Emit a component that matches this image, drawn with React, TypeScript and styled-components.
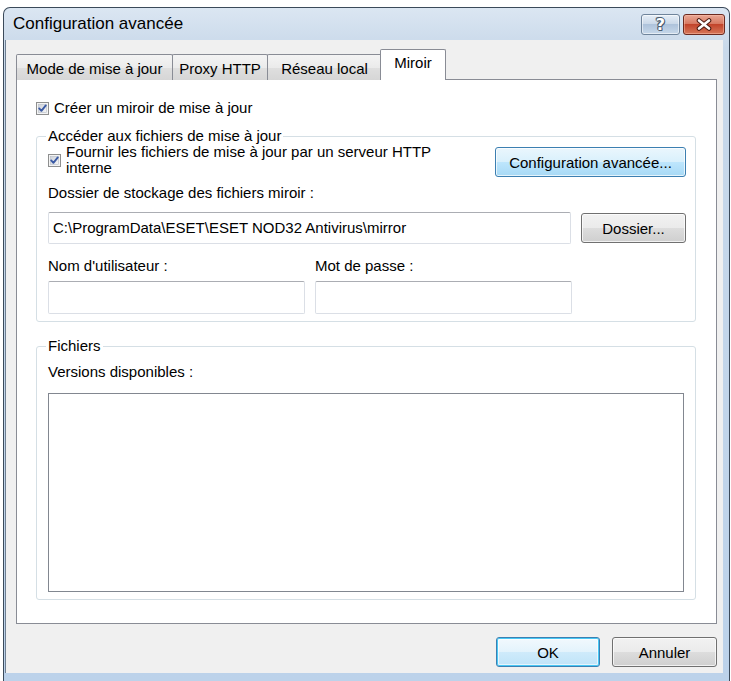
import React from "react";
import styled, { createGlobalStyle, css } from "styled-components";

const GlobalStyle = createGlobalStyle`
  html, body {
    margin: 0;
    padding: 0;
    background: #ffffff;
  }
  body {
    font-family: "Liberation Sans", Arial, sans-serif;
    font-size: 15px;
    color: #000;
  }
`;

const Page = styled.div`
  width: 731px;
  height: 681px;
  padding: 7px 0 0 3px;
  box-sizing: border-box;
  overflow: hidden;
`;

const Window = styled.div`
  width: 727px;
  height: 674px;
  box-sizing: border-box;
  display: flex;
  flex-direction: column;
  border: 1px solid #3b4a5a;
  border-bottom: none;
  border-radius: 7px 7px 0 0;
  background: linear-gradient(#dbe6f2 0px, #c9d9ea 40px, #bcd2ea 100%);
  padding: 0 6px 8px 1px;
`;

const TitleBar = styled.div`
  height: 32px;
  display: flex;
  justify-content: space-between;
  align-items: flex-start;
  padding: 0 0 0 8px;
  margin-right: -2px;
`;

const Title = styled.div`
  font-size: 17px;
  line-height: 32px;
  color: #000;
`;

const Caption = styled.div`
  display: flex;
  gap: 3px;
  margin-top: 6px;
`;

const CaptionButton = styled.div<{ $kind: "help" | "close" }>`
  height: 21px;
  box-sizing: border-box;
  border-radius: 3px;
  display: flex;
  align-items: center;
  justify-content: center;
  ${(p) =>
    p.$kind === "help"
      ? css`
          width: 39px;
          border: 1px solid #6f849b;
          background: linear-gradient(#e6eef7 0%, #cbd9e9 45%, #aec3db 50%, #c7d8ea 100%);
          box-shadow: inset 0 0 0 1px rgba(255, 255, 255, 0.55);
        `
      : css`
          width: 42px;
          border: 1px solid #6b2a20;
          background: linear-gradient(#eaa896 0%, #d77a63 45%, #c2442b 50%, #d6775a 100%);
          box-shadow: inset 0 0 0 1px rgba(255, 200, 180, 0.45);
        `}
`;

const HelpGlyph = styled.span`
  font-family: "DejaVu Sans", sans-serif;
  font-weight: bold;
  font-size: 16px;
  line-height: 1;
  color: #ffffff;
  text-shadow: 1px 0 0 #4d5d70, -1px 0 0 #4d5d70, 0 1px 0 #4d5d70, 0 -1px 0 #4d5d70,
    1px 1px 0 #4d5d70, -1px -1px 0 #4d5d70;
`;

const Client = styled.div`
  flex: 1;
  display: flex;
  flex-direction: column;
  background: #f0f0f0;
  padding: 9px 6px 6px 10px;
  border-left: 1px solid #6e7f92;
`;

const TabStrip = styled.div`
  height: 31px;
  display: flex;
  align-items: flex-end;
  padding-left: 1px;
  position: relative;
  z-index: 1;
`;

const Tab = styled.div<{ $width: number; $active?: boolean }>`
  width: ${(p) => p.$width}px;
  box-sizing: border-box;
  border: 1px solid #898c95;
  border-bottom: none;
  border-radius: 2px 2px 0 0;
  text-align: center;
  font-size: 15px;
  margin-left: -1px;
  ${(p) =>
    p.$active
      ? css`
          height: 31px;
          margin-left: -2px;
          margin-right: -2px;
          background: #ffffff;
          line-height: 26px;
          position: relative;
        `
      : css`
          height: 26px;
          background: linear-gradient(#f4f4f4 0%, #ebebeb 50%, #dfdfdf 51%, #d6d6d6 100%);
          line-height: 28px;
        `}
`;

const Panel = styled.div`
  flex: 1;
  margin-top: -1px;
  border: 1px solid #898c95;
  background: #ffffff;
  padding: 20px 20px 0 19px;
  display: flex;
  flex-direction: column;
`;

const CheckRow = styled.div`
  display: flex;
  align-items: center;
  gap: 5px;
  line-height: 16px;
`;

const Box = styled.span`
  width: 13px;
  height: 13px;
  flex: 0 0 13px;
  display: block;
`;

const Group = styled.div<{ $gap: number }>`
  margin-top: ${(p) => p.$gap}px;
  border: 1px solid #d5dfe5;
  border-radius: 3px;
  padding: 0 9px 7px 11px;
  display: flex;
  flex-direction: column;
`;

const GroupTitle = styled.div`
  align-self: flex-start;
  margin: -9px 0 0 -2px;
  padding: 0 2px;
  background: #ffffff;
  line-height: 16px;
`;

const FirstRow = styled.div`
  display: flex;
  justify-content: space-between;
  align-items: flex-start;
`;

const TwoLineCheck = styled.div`
  display: flex;
  align-items: center;
  gap: 5px;
  line-height: 16px;
`;

const Label = styled.div<{ $gap: number }>`
  margin-top: ${(p) => p.$gap}px;
  line-height: 16px;
`;

const FieldRow = styled.div`
  margin-top: 11px;
  display: flex;
  align-items: center;
  gap: 10px;
`;

const TextBox = styled.div<{ $height: number }>`
  height: ${(p) => p.$height}px;
  box-sizing: border-box;
  border: 1px solid #dbdfe6;
  border-top-color: #abadb3;
  border-radius: 2px;
  background: #ffffff;
  padding: 0 4px;
  display: flex;
  align-items: center;
  line-height: 16px;
  white-space: nowrap;
  overflow: hidden;
`;

const PathBox = styled(TextBox)`
  flex: 1;
`;

const Columns = styled.div`
  margin-top: 14px;
  display: grid;
  grid-template-columns: 257px 257px;
  column-gap: 10px;
  row-gap: 7px;
  line-height: 16px;
`;

const ListBox = styled.div`
  margin: 13px 2px 0 0;
  height: 199px;
  box-sizing: border-box;
  border: 1px solid #828790;
  background: #ffffff;
`;

const Button = styled.div<{ $width: number; $variant?: "hot" | "default" }>`
  width: ${(p) => p.$width}px;
  height: 30px;
  box-sizing: border-box;
  border-radius: 3px;
  display: flex;
  align-items: center;
  justify-content: center;
  font-size: 15px;
  flex: 0 0 auto;
  ${(p) =>
    p.$variant === "hot"
      ? css`
          border: 1px solid #3c7fb1;
          background: linear-gradient(#eaf6fd 0%, #d9f0fc 49%, #bee6fd 50%, #a7d9f5 100%);
          box-shadow: inset 0 0 0 1px rgba(255, 255, 255, 0.7);
        `
      : p.$variant === "default"
      ? css`
          border: 1px solid #3c7fb1;
          background: linear-gradient(#f2f9fd 0%, #e3f3fc 49%, #cfebfb 50%, #bfe3f8 100%);
          box-shadow: inset 0 0 0 1px #48c8f5, inset 0 0 0 2px rgba(255, 255, 255, 0.6);
        `
      : css`
          border: 1px solid #707070;
          background: linear-gradient(#f2f2f2 0%, #ebebeb 49%, #dddddd 50%, #cfcfcf 100%);
          box-shadow: inset 0 0 0 1px rgba(255, 255, 255, 0.7);
        `}
`;

const ButtonBar = styled.div`
  margin-top: 13px;
  display: flex;
  justify-content: flex-end;
  gap: 12px;
`;

function CheckBox() {
  return (
    <Box>
      <svg width="13" height="13" viewBox="0 0 13 13">
        <defs>
          <linearGradient id="cbg" x1="0" y1="0" x2="1" y2="1">
            <stop offset="0" stopColor="#cdd1d8" />
            <stop offset="1" stopColor="#f7f7f7" />
          </linearGradient>
        </defs>
        <rect x="0.5" y="0.5" width="12" height="12" fill="#f4f4f4" stroke="#8e8f8f" />
        <rect x="2.5" y="2.5" width="8" height="8" fill="url(#cbg)" stroke="#b6bcc6" strokeWidth="0.6" />
        <path d="M3.2 6.4 L5.4 8.8 L9.8 3.4" fill="none" stroke="#3b5aa4" strokeWidth="1.9" strokeLinecap="round" strokeLinejoin="round" />
      </svg>
    </Box>
  );
}

function CloseGlyph() {
  return (
    <svg width="18" height="13" viewBox="0 0 18 13">
      <path d="M4 2.5 L14 10.5 M14 2.5 L4 10.5" stroke="#4a1a12" strokeWidth="4.6" strokeLinecap="round" />
      <path d="M4 2.5 L14 10.5 M14 2.5 L4 10.5" stroke="#ffffff" strokeWidth="2.6" strokeLinecap="round" />
    </svg>
  );
}

export default function App() {
  return (
    <>
      <GlobalStyle />
      <Page>
        <Window>
          <TitleBar>
            <Title>Configuration avancée</Title>
            <Caption>
              <CaptionButton $kind="help">
                <HelpGlyph>?</HelpGlyph>
              </CaptionButton>
              <CaptionButton $kind="close">
                <CloseGlyph />
              </CaptionButton>
            </Caption>
          </TitleBar>
          <Client>
            <TabStrip>
              <Tab $width={157}>Mode de mise à jour</Tab>
              <Tab $width={96}>Proxy HTTP</Tab>
              <Tab $width={115}>Réseau local</Tab>
              <Tab $width={66} $active>
                Miroir
              </Tab>
            </TabStrip>
            <Panel>
              <CheckRow>
                <CheckBox />
                <span>Créer un miroir de mise à jour</span>
              </CheckRow>

              <Group $gap={20}>
                <GroupTitle>Accéder aux fichiers de mise à jour</GroupTitle>
                <FirstRow>
                  <TwoLineCheck>
                    <CheckBox />
                    <span>
                      Fournir les fichiers de mise à jour par un serveur HTTP
                      <br />
                      interne
                    </span>
                  </TwoLineCheck>
                  <Button $width={191} $variant="hot" style={{ marginTop: 3 }}>
                    Configuration avancée...
                  </Button>
                </FirstRow>
                <Label $gap={8}>Dossier de stockage des fichiers miroir :</Label>
                <FieldRow>
                  <PathBox $height={32}>C:\ProgramData\ESET\ESET NOD32 Antivirus\mirror</PathBox>
                  <Button $width={105}>Dossier...</Button>
                </FieldRow>
                <Columns>
                  <span>Nom d'utilisateur :</span>
                  <span>Mot de passe :</span>
                  <TextBox $height={33} />
                  <TextBox $height={33} />
                </Columns>
              </Group>

              <Group $gap={24}>
                <GroupTitle>Fichiers</GroupTitle>
                <Label $gap={10}>Versions disponibles :</Label>
                <ListBox />
              </Group>
            </Panel>
            <ButtonBar>
              <Button $width={104} $variant="default">
                OK
              </Button>
              <Button $width={105}>Annuler</Button>
            </ButtonBar>
          </Client>
        </Window>
      </Page>
    </>
  );
}
